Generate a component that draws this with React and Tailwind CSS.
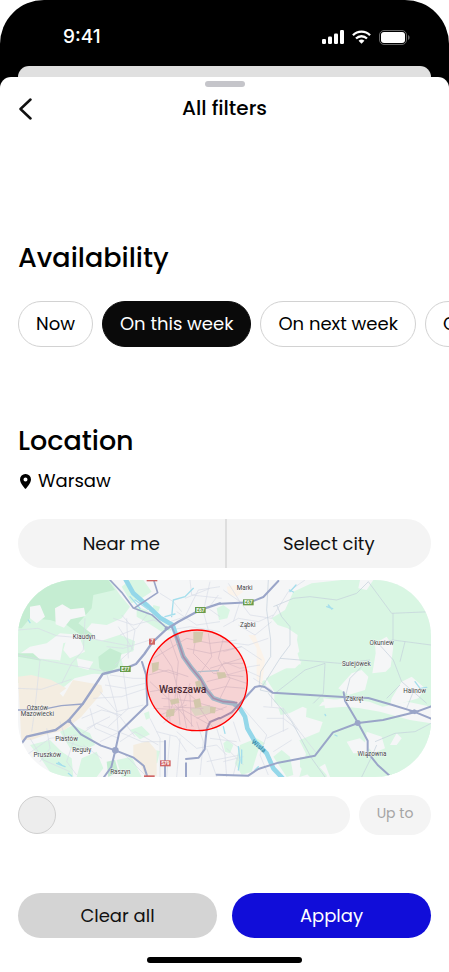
import React, { useState } from 'react';

const periods = ['Now', 'On this week', 'On next week', 'On this month'];

const places = [
  { name: 'Klaudyn', x: 222, y: 192 },
  { name: 'Ożarów', x: 82, y: 404 },
  { name: 'Mazowiecki', x: 82, y: 422 },
  { name: 'Piastów', x: 170, y: 499 },
  { name: 'Reguły', x: 215, y: 531 },
  { name: 'Pruszków', x: 112, y: 546 },
  { name: 'Raszyn', x: 331, y: 598 },
  { name: 'Marki', x: 704, y: 46 },
  { name: 'Ząbki', x: 713, y: 157 },
  { name: 'Okuniew', x: 1115, y: 211 },
  { name: 'Sulejówek', x: 1039, y: 273 },
  { name: 'Halinów', x: 1214, y: 354 },
  { name: 'Zakręt', x: 1034, y: 379 },
  { name: 'Wiązowna', x: 1086, y: 544 },
];

const shields = [
  { label: 'E67', x: 571, y: 105, color: '#6a9c4b' },
  { label: 'E67', x: 715, y: 82, color: '#6a9c4b' },
  { label: 'E77', x: 346, y: 282, color: '#6a9c4b' },
  { label: '7', x: 426, y: 200, color: '#cf6565' },
  { label: 'S79', x: 466, y: 565, color: '#cf6565' },
  { label: '', x: 426, y: 10, color: '#cf6565' },
  { label: '', x: 418, y: 610, color: '#cf6565' },
];

function StatusBar() {
  return (
    <div className="flex h-[66px] items-center justify-between pt-2 pr-[39px] pl-[63px] text-white">
      <span className="font-['Inter',sans-serif] text-[19px] leading-6 font-medium">9:41</span>
      <div className="flex items-center gap-2">
        <svg viewBox="0 0 22 14" className="h-[14px] w-[22px]" fill="currentColor">
          <rect x="0" y="9" width="4" height="5" rx="1.2" />
          <rect x="6" y="6.500" width="4" height="7.500" rx="1.2" />
          <rect x="12" y="3.500" width="4" height="10.500" rx="1.2" />
          <rect x="18" y="0" width="4" height="14" rx="1.2" />
        </svg>
        <svg viewBox="0 0 20 14" className="h-[14px] w-[19px]" fill="none" stroke="currentColor" strokeWidth="2.4">
          <path d="M1 5.2C6 .2 14 .2 19 5.2" />
          <path d="M4.2 8.6c3.3-3.2 8.3-3.2 11.600 0" />
          <path d="M10 14 6.9 10.9c1.800-1.600 4.400-1.600 6.200 0z" fill="currentColor" stroke="none" />
        </svg>
        <svg viewBox="0 0 31 15" className="h-[15px] w-[31px]">
          <rect x=".5" y=".5" width="27" height="14" rx="4.5" fill="none" stroke="#666" />
          <rect x="2" y="2" width="24" height="11" rx="3" fill="#fff" />
          <path d="M29 5v5c1-.4 1.6-1.4 1.6-2.5S30 5.4 29 5z" fill="#666" />
        </svg>
      </div>
    </div>
  );
}

function AreaMap() {
  return (
    <svg viewBox="24 15 1239 591" role="img" aria-label="Map of Warsaw" className="mt-3 block h-auto w-full rounded-[56px]">
      <rect x="24" y="15" width="1239" height="591" fill="#f5f6f7" />

      {/* woods and parks */}
      <g fill="#d9f6e3">
        <path d="M24 15H300L330 60 360 95 335 130 290 150 245 145 215 180 150 175 110 205 60 215 24 240z" />
        <path d="M160 205l60-20 55 12 55-18 45 20-5 30-40 10 10 35-45 25-75-5-40-28-30-6z" />
        <path d="M24 235l50 15 70 5 70 20 50-5-10 25-60 15-50 40-60-12-60-15z" />
        <path d="M380 95l30 10 20 20 40 25 15 15-30 5-40-25-35-20z" />
        <path d="M335 35l25-20 40 0 25 35-30 20-30 15zM430 90l20 5-5 15-18-5z" />
        <path d="M150 470l40-20 50 25 15 35-35 15-40-5zM60 510l60-15 35 35 30 20 5 56H130l-30-45z" />
        <path d="M215 550l45-20 20 50-20 26h-60zM320 555l45-10 30 61h-60zM360 465l35-12 25 25-30 15z" />
        <path d="M400 520l50 8-8 35-25 15zM402 415l15-6 3 20-12 5zM540 400l60-10 0 25-45 8z" />
        <path d="M785 130l40-25 25-55 55-25 90-10H1170l60 45 33 85v250l-70-15-75 15-40-15-75-10-65 10-25 30-35-15-40 20-45-35 0-30-25-40 60-30 45-10-15-50 5-40-30-20-30-10z" />
        <path d="M890 400l60-10 100 10 60 10 90 25 63 10v35l-60 50-40 70h-70l-40-50-70 30-35-15-60 35-20 6 20-70-20-40 60-25 10-30-50-15z" />
        <path d="M930 500l65-15 70 35 20 30 50 15 15 41H960l-15-40zM870 545l35 5 45 50v6h-50l-30-30z" />
        <path d="M1120 500l60-30 83-20v156h-150l-10-50z" />
        <path d="M620 100l20-10 20 15-8 25-25 5zM830 260l50 10 5 25-55 5zM805 400l20 0 12 15-25 5zM750 320l15-5 5 15-15 5z" />
        <path d="M690 510l50-20 25 15-20 20-20 65-30 10-20-35zM790 545l25-20 25 20 10 55-20 6z" />
        <path d="M640 505l12-10 18 15-10 25-15-5z" />
      </g>
      <g fill="#c5edd2">
        <path d="M45 80L95 25l15-10H295l20 30-65 15-5 40-40 45 45 35-25 10-55-40-50-15-60-5-25 30-28 0z" />
        <path d="M265 245l35-25 35 15-12 40-35 22-20-18zM24 235l45 0 25 22-70-12z" />
        <path d="M290 560l25-5 10 35-30 16z" />
      </g>

      {/* built-up ground */}
      <g fill="#f4ede1">
        <path d="M24 305l40-5 60 15 45 25-20 15 10 10 30-50 85 15 5 20-35 40-30 35-50 40-60 15-40 15-30 0z" />
        <path d="M370 510l45-12 25 30 0 75h-35l-15-40-20-20z" />
        <path d="M715 180l20 0 20 50 10 25-10 85-15-30 0-90z" fill="#fbf3ea" />
        <path d="M650 35l30-5 20 20-20 15-25-8z" fill="#fbf3ea" />
      </g>
      <g fill="#f5f6f7">
        <path d="M135 100l22-12 25 15 40-5 5 25-45 10-20 25-25-10zM60 95l30-5 15 35-25 20-20-15zM170 190l40 0 15 40-45 20-20-25z" />
        <path d="M838 195l20-15 10 50-30 25-10-25zM1095 205l35-20 20 30-8 60-15 15-40 5 10-60zM985 340l40-45 30-10 20 20-10 40-50 15z" />
        <path d="M1145 370l30-50 30-15 40 35-20 30-50 15-35 5zM1010 500l40-10 30 25-10 20-40 0zM825 240l50 20-20 20-50 0z" />
        <path d="M940 370l45 5 20 20-60 5zM1070 470l45 15 10 35-35 15-25-30zM200 250l50 10-15 25-30-8z" />
        <path d="M1050 15h40l-20 30-25-5zM1160 475l15 15-15 20-20 0z" />
      </g>

      {/* local roads */}
      <g fill="none" stroke="#d8dde7" strokeWidth="2">
        <path d="M24 165l60-5 55 22 110 10 115 22M225 130l-5 95-35 40-30 60M24 240l100 20 165 30M90 255l-15 145-10 70M24 340l70 3 90-30" />
        <path d="M335 120l40 45-10 60-50 45M330 180l50-20 45-60M290 215l50 5 80-25M350 130l5 120M310 130l60 20 60-15 35 15M325 155l45 70" />
        <path d="M300 300l70 10 40 0M285 330l60 10 60-15M270 350l50 60 80-20M260 390l70 35 45 60M340 290l15 110-60 55M240 400l15 60 70 30M215 430l60-25 60 15M230 460l70-35" />
        <path d="M250 370l85-5 75-25M290 295l30 110 5 75M210 480l50-35 90 35M270 500l60-30" />
        <path d="M450 55l40 25 25 30M480 140l45-15 40-80 65-10M540 15l5 45 90 10M500 110l60 40 70-10M480 165l60-10 90 15M600 20l-20 90 15 55M625 60l-30 40 35 25M525 70l75-30" />
        <path d="M640 45l50 35 30 40 65 10 50-80 50-35M655 25l35 55-20 60M640 155l45-25 60 10 45-20M685 150l50 30 50-40M635 200l80 10 60-20M640 230l55-15 60 40M640 260l50 20 60-10M650 300l55-15 45 20M730 310l55 35 0 50" />
        <path d="M760 395l60 5 45 65 55 70M700 400l70 80-20 60 25 60M770 430l50 0 45 35M770 490l65-30M790 530l55-35M820 400l0 70" />
        <path d="M420 430l30 60 0 116M440 470l60 15 30 45M480 480l-10 126M500 470l60 50 60-10 30 30M560 440l20 60-10 100M590 520l30 85M620 460l25 80 5 66M510 490l-10 116M590 560l100-20M350 480l45 20 70 0M600 490l80 10" />
        <path d="M110 460l10 60-30 40M150 440l20 60 60 20M50 540l70-50 80-10M190 500l-20 60 30 40M220 510l55 40M330 500l45-30 70 40M345 540l60 60M60 490l40 65 80 35" />
        <path d="M630 480l60 40-20 80M640 560l60-15M670 440l20 60M650 520l50 50" />
      </g>
      <g fill="none" stroke="#c3cedb" strokeWidth="2">
        <path d="M775 15l-5 90 12 90 0 50-30 45-5 45M750 345l60-95 180 15 90-10M810 250l30-40 0-55-25-30-15-35M750 345l45 10 90-70 60-20" />
        <path d="M790 95l60-25 50-5 80 10 60-20 35-35 70 95 118-5M1149 115l0 80-20 5M1149 195l114 15M1100 200l50 55 25 65 75 65M1005 370l15-60 40-40M945 265l-5 90-30 30M1185 200l-15 60" />
        <path d="M1100 510l-15 35-30 61M1095 500l60-25 60-5 48-25M1170 330l-40 40M1210 350l-20 50M775 355l70 85 60 110 40 56" />
      </g>

      {/* Vistula */}
      <path d="M345 10l25 45 40 35 40 38 38 22 17 50 15 45 25 35 25 30 20 35 20 25 30 10 30 5 20 15 15 25 7 35 23 40 35 35 20 45 30 32" fill="none" stroke="#94d7e9" strokeWidth="14" strokeLinejoin="round" />
      <g fill="none" stroke="#a5deec" strokeWidth="4" strokeLinecap="round">
        <path d="M360 65l30 35M375 75l40 28M485 125l5-50M465 125l30-8M490 75l35-10 25-25M840 50l18-20M838 45l12 6M950 95l18 6M955 90l10 12" />
        <path d="M1215 320l15 20 20-3M140 565l25 10M155 570l-10-8M175 595l10 8M55 135l5 8M975 480l6 3M945 418l2 4M685 515l5 40-5 30M695 525l0 40M735 585l10-10M565 290l60-3M640 455l5 20" />
      </g>

      {/* dense centre streets */}
      <g fill="none" stroke="#cfd4e1" strokeWidth="2">
        <path d="M430 250l100-60 70 15 80-10M415 300l60-15 60 20M420 350l90-15 60 50 70 20M430 400l90 5 80 45M445 215l40 60 30 110 15 75M480 190l25 70-10 110-25 65M420 320l80 75 50 60M540 325l-20 60-60 60" />
        <path d="M560 170l-10 65 60 60 90 10M595 175l10 70-35 50M640 190l-15 60 35 60-30 60M530 220l70 15 95-20M590 320l60-15 60 20M585 350l60-15 60 5M570 400l40 60M455 370l110 10M460 395l120 5M500 340l10 110M475 340l5 100M540 360l5 95M560 430l90-35" />
        <path d="M620 290l20-25 60 0M600 280l95-30M435 280l70 20M450 420l80-30" />
      </g>
      <g fill="#cbe8c8">
        <path d="M550 170l30 0-5 30-25 5zM425 265l22-5-2 25-18 8zM555 320l18-5 3 25-16 0zM480 375l25-6 3 15-25 5zM470 405l25-5-3 22-25 5zM550 375l20-5 5 25-20 5zM600 395l18 2-3 18-15 0zM620 292l25 0 5 15-25 5z" />
      </g>

      {/* main roads */}
      <g fill="none" stroke="#9aa5c8" strokeWidth="7" strokeLinejoin="round" strokeLinecap="round">
        <path d="M300 15l35 37 35 47 55 20 45 40M375 98l68-45-12-38" strokeWidth="5" />
        <path d="M630 85l-60 20-65 35-35 22-43 40-24 35-25 30-32 13-68 17-60 90-43 50-38 28-87 20-24 32" />
        <path d="M630 86l90-4 40-16 45-48" strokeWidth="6" />
        <path d="M178 438l35 40 60 34 43 14 55 22 30 24 10 30M316 526l12-55 84-82-4-90-12-38M316 526l-12 50-22 30" strokeWidth="6" />
        <path d="M24 405l70-1 60-12 65-5" strokeWidth="4" />
        <path d="M465 498v108M528 552l38-4 18-25 6-60 10-22 28-12M528 565v41M630 430l35-18 70-76 15-3 14 3 24 17 212 13 75 3 70 20 65 20 53 22" strokeWidth="6" />
        <path d="M485 155l20 45 15 45 25 35 25 30 20 35 20 25 30 10 40 3" strokeWidth="5" />
        <path d="M620 599l95 3 30-20 60-19 110-21 54-70 75-28 75-9 95-23 49-18M1001 352l4 25 38 65 30 55v35l30 38 40 36" strokeWidth="6" />
      </g>
      <g fill="#9aa5c8">
        <circle cx="316" cy="526" r="10" />
        <circle cx="1043" cy="444" r="9" />
        <path d="M1195 411l18-8 14 6-12 9z" />
        <circle cx="178" cy="438" r="6" />
        <circle cx="470" cy="160" r="6" />
      </g>

      {shields.map((s, i) => (
        <g key={i}>
          <rect x={s.x - (s.label.length === 1 ? 9 : 16)} y={s.y - 9} width={s.label.length === 1 ? 18 : 32} height="18" fill={s.color} />
          <text x={s.x} y={s.y + 5} fill="#fff" fontSize="14" fontWeight="700" textAnchor="middle" className="font-['Roboto',sans-serif]">{s.label}</text>
        </g>
      ))}

      <circle cx="561" cy="316" r="151" fill="#ff0000" fillOpacity="0.14" stroke="#ff0000" strokeWidth="4" />

      <g fill="#3c3f43" fontSize="19" fontWeight="400" textAnchor="middle" stroke="#fff" strokeWidth="2" paintOrder="stroke" className="font-['Roboto',sans-serif]">
        {places.map((p) => (
          <text key={p.name} x={p.x} y={p.y}>{p.name}</text>
        ))}
      </g>
      <text x="518" y="353" fill="#4b2a33" fontSize="31" fontWeight="500" textAnchor="middle" className="font-['Roboto',sans-serif]">Warszawa</text>
      <text x="746" y="520" fill="#3b8ca5" fontSize="20" fontWeight="500" textAnchor="middle" transform="rotate(38 746 514)" className="font-['Roboto',sans-serif]">Wisła</text>
    </svg>
  );
}

export default function App() {
  const [period, setPeriod] = useState('On this week');
  const [radius, setRadius] = useState(0);

  return (
    <div className="min-h-screen bg-white font-['Poppins','Inter',sans-serif] text-black">
      <div className="rounded-t-[44px] bg-black">
        <StatusBar />
        <div className="mx-[18px] h-[11px] rounded-t-[11px] bg-[#e0e0e0]" />

        <main className="overflow-hidden rounded-t-[11px] bg-white px-[18px] pt-1">
          <div className="mx-auto h-[6px] w-10 rounded-full bg-[#c5c5ca]" />

          <header className="grid grid-cols-[40px_1fr_40px] items-center pt-1">
            <button type="button" aria-label="Back" className="flex h-9 items-center">
              <svg viewBox="0 0 15 22" className="h-[22px] w-[15px]" fill="none" stroke="#111" strokeWidth="2.5" strokeLinecap="round" strokeLinejoin="round">
                <path d="M12.5 1.5L2.5 11l10 9.5" />
              </svg>
            </button>
            <h1 className="pb-[2px] text-center text-xl leading-7 font-medium">All filters</h1>
          </header>

          <section className="pt-[113px]">
            <h2 className="text-[27px] leading-9 font-medium">Availability</h2>
            <div className="-mr-[18px] flex gap-[9px] overflow-hidden pt-[25px]">
              {periods.map((item) => (
                <button
                  key={item}
                  type="button"
                  aria-pressed={period === item}
                  onClick={() => setPeriod(item)}
                  className={`h-[46px] shrink-0 rounded-full border px-[17px] text-lg whitespace-nowrap ${
                    period === item ? 'border-[#0a0a0a] bg-[#0a0a0a] text-white' : 'border-[#d2d2d2] bg-white text-black'
                  }`}
                >
                  {item}
                </button>
              ))}
            </div>
          </section>

          <section className="pt-[76px]">
            <h2 className="text-[27px] leading-9 font-medium">Location</h2>
            <p className="flex items-center gap-[7px] pt-2 pl-[2px] text-lg leading-7">
              <svg viewBox="0 0 11 15" className="h-[15px] w-[11px]" fill="#000" fillRule="evenodd">
                <path d="M5.500 0A5.400 5.400 0 0 0 0 5.400C0 9.400 5.500 15 5.500 15S11 9.400 11 5.400A5.400 5.400 0 0 0 5.500 0zM5.500 3.500a2 2 0 1 1 0 4 2 2 0 0 1 0-4z" />
              </svg>
              Warsaw
            </p>

            <div className="mt-6 grid h-[49px] grid-cols-2 overflow-hidden rounded-full bg-[#f4f4f4] text-lg text-[#111]">
              <button type="button">Near me</button>
              <button type="button" className="border-l-2 border-[#dedede]">Select city</button>
            </div>

            <AreaMap />

            <div className="flex items-center gap-[9px] pt-[18px]">
              <input
                type="range"
                aria-label="Distance"
                min="0"
                max="100"
                value={radius}
                onChange={(e) => setRadius(Number(e.target.value))}
                className="h-[38px] min-w-0 flex-1 appearance-none rounded-full bg-[#f4f4f4] [&::-webkit-slider-thumb]:size-[38px] [&::-webkit-slider-thumb]:appearance-none [&::-webkit-slider-thumb]:rounded-full [&::-webkit-slider-thumb]:border [&::-webkit-slider-thumb]:border-[#d0d0d0] [&::-webkit-slider-thumb]:bg-[#ededed]"
              />
              <input
                type="text"
                aria-label="Maximum distance"
                placeholder="Up to"
                className="h-10 w-[72px] rounded-full bg-[#f4f4f4] pb-1 text-center text-sm placeholder:text-[#a5a5a5]"
              />
            </div>
          </section>

          <footer className="pt-[58px] pb-[9px]">
            <div className="grid grid-cols-2 gap-[15px] text-lg">
              <button type="button" className="h-[45px] rounded-full bg-[#d4d4d4] text-[#111]">Clear all</button>
              <button type="button" className="h-[45px] rounded-full bg-[#110dd9] text-white">Applay</button>
            </div>
            <div className="mx-auto mt-[19px] h-[6px] w-[155px] rounded-full bg-black" />
          </footer>
        </main>
      </div>
    </div>
  );
}
